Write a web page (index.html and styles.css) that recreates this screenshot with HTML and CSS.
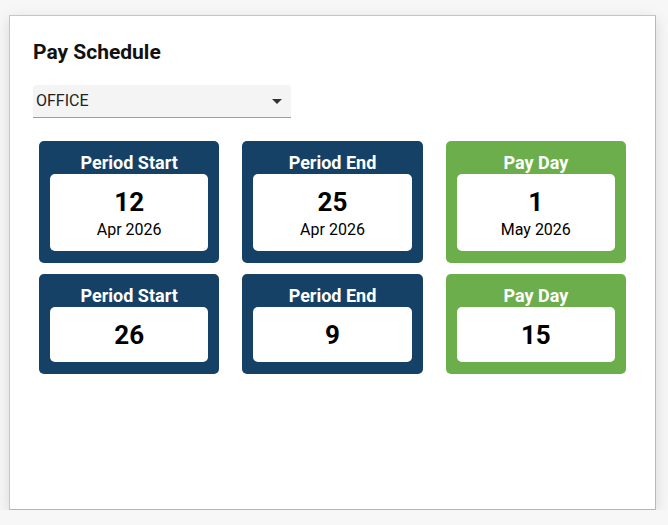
FILE: index.html
```html
<!DOCTYPE html>
<html lang="en">
<head>
<meta charset="utf-8">
<title>Pay Schedule</title>
<link rel="stylesheet" href="styles.css">
</head>
<body>
<div class="card">
  <h1 class="title">Pay Schedule</h1>
  <div class="select">
    <span class="select-value">OFFICE</span>
    <span class="select-arrow"></span>
  </div>
  <div class="grid">
    <div class="tile tile-blue">
      <div class="tile-head">Period Start</div>
      <div class="tile-body">
        <div class="tile-num">12</div>
        <div class="tile-date">Apr 2026</div>
      </div>
    </div>
    <div class="tile tile-blue">
      <div class="tile-head">Period End</div>
      <div class="tile-body">
        <div class="tile-num">25</div>
        <div class="tile-date">Apr 2026</div>
      </div>
    </div>
    <div class="tile tile-green">
      <div class="tile-head">Pay Day</div>
      <div class="tile-body">
        <div class="tile-num">1</div>
        <div class="tile-date">May 2026</div>
      </div>
    </div>
    <div class="tile tile-blue">
      <div class="tile-head">Period Start</div>
      <div class="tile-body">
        <div class="tile-num">26</div>
      </div>
    </div>
    <div class="tile tile-blue">
      <div class="tile-head">Period End</div>
      <div class="tile-body">
        <div class="tile-num">9</div>
      </div>
    </div>
    <div class="tile tile-green">
      <div class="tile-head">Pay Day</div>
      <div class="tile-body">
        <div class="tile-num">15</div>
      </div>
    </div>
  </div>
</div>
</body>
</html>
```

FILE: styles.css
```css
html, body {
  margin: 0;
  padding: 0;
}
body {
  background: #f7f7f7;
  font-family: Roboto, "Liberation Sans", Arial, sans-serif;
  padding: 15px 0 0 9px;
}
.card {
  box-sizing: border-box;
  width: 647px;
  height: 495px;
  background: #fff;
  border: 1px solid #c6c6c6;
  border-bottom-color: #b4b4b4;
  border-right-color: #b8b8b8;
  box-shadow: 0 4px 14px rgba(0, 0, 0, 0.13);
  padding: 24px 23px 23px;
}
.title {
  margin: 0;
  font-size: 21px;
  line-height: 25px;
  font-weight: 700;
  color: #111;
}
.select {
  margin-top: 20px;
  width: 258px;
  height: 33px;
  box-sizing: border-box;
  background: #f4f4f4;
  border-bottom: 1px solid #9e9e9e;
  border-radius: 4px 4px 0 0;
  display: flex;
  align-items: center;
  justify-content: space-between;
  padding: 0 9px 0 3px;
}
.select-value {
  font-size: 16px;
  color: #222;
  line-height: 19px;
  padding-bottom: 1px;
}
.select-arrow {
  width: 0;
  height: 0;
  border-left: 5px solid transparent;
  border-right: 5px solid transparent;
  border-top: 5px solid #333;
}
.grid {
  margin-top: 23px;
  padding: 0 6px;
  display: grid;
  grid-template-columns: repeat(3, 1fr);
  column-gap: 23px;
  row-gap: 11px;
}
.tile {
  border-radius: 5px;
  padding: 11px 11px 12px;
}
.tile-blue {
  background: #164166;
}
.tile-green {
  background: #6cae4c;
}
.tile-head {
  color: #fff;
  font-size: 18px;
  font-weight: 700;
  line-height: 21px;
  text-align: center;
  margin-bottom: 1px;
}
.tile-body {
  background: #fff;
  border-radius: 5px;
  padding: 13px 4px 12px;
  text-align: center;
  color: #000;
}
.tile-num {
  font-size: 26px;
  font-weight: 700;
  line-height: 30px;
}
.tile-date {
  font-size: 16px;
  line-height: 19px;
  margin-top: 3px;
}
```
